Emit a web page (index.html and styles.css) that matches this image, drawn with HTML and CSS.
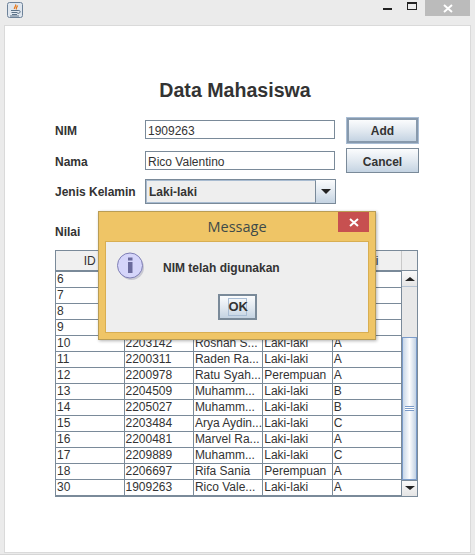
FILE: index.html
```html
<!DOCTYPE html>
<html lang="en">
<head>
    <meta charset="UTF-8">
    <meta name="viewport" content="width=device-width, initial-scale=1.0">
    <title>Data Mahasiswa</title>
    <link rel="stylesheet" href="styles.css">
</head>
<body>
    <div class="titlebar">
        <svg class="app-icon" width="16" height="16" viewBox="0 0 16 16">
            <rect x="0.5" y="0.5" width="15" height="15" rx="2" fill="#dfe6ee" stroke="#6d8299"/>
            <path d="M8.5 2.5C10 4 6.5 5 7.5 7M10.5 3.5C10.5 5 8.5 5.5 9.5 7.5" fill="none" stroke="#e8791c" stroke-width="1.3"/>
            <path d="M4 8.5H11M4.5 10.5H10.5M5 12.5H10M3 14H12M11 8.5C14 8 14 11.5 10.5 11.5" fill="none" stroke="#5b7187"/>
        </svg>
        <div class="controls">
            <span class="minimize"></span>
            <span class="maximize"></span>
            <span class="close">
                <svg width="10" height="9" viewBox="0 0 10 9"><path d="M1 1L9 8M9 1L1 8" stroke="#fff" stroke-width="2"/></svg>
            </span>
        </div>
    </div>

    <div class="content">
        <h1>Data Mahasiswa</h1>

        <div class="form">
            <label>NIM</label>
            <input class="field field-top" type="text" value="1909263">
            <button class="btn btn-focus">Add</button>

            <label class="label-low">Nama</label>
            <input class="field" type="text" value="Rico Valentino">
            <button class="btn btn-cancel">Cancel</button>

            <label class="label-low">Jenis Kelamin</label>
            <div class="combo">
                <span class="combo-value">Laki-laki</span>
                <span class="combo-arrow"><i></i></span>
            </div>
            <span></span>

            <label class="nilai-label">Nilai</label>
        </div>

        <div class="table-wrap">
            <table>
                <thead>
                    <tr><th class="col-id">ID</th><th></th><th></th><th></th><th>Nilai</th></tr>
                </thead>
                <tbody>
                    <tr><td>6</td><td></td><td></td><td></td><td></td></tr>
                    <tr><td>7</td><td></td><td></td><td></td><td></td></tr>
                    <tr><td>8</td><td></td><td></td><td></td><td></td></tr>
                    <tr><td>9</td><td></td><td></td><td></td><td></td></tr>
                    <tr><td>10</td><td>2203142</td><td>Roshan S...</td><td>Laki-laki</td><td>A</td></tr>
                    <tr><td>11</td><td>2200311</td><td>Raden Ra...</td><td>Laki-laki</td><td>A</td></tr>
                    <tr><td>12</td><td>2200978</td><td>Ratu Syah...</td><td>Perempuan</td><td>A</td></tr>
                    <tr><td>13</td><td>2204509</td><td>Muhamm...</td><td>Laki-laki</td><td>B</td></tr>
                    <tr><td>14</td><td>2205027</td><td>Muhamm...</td><td>Laki-laki</td><td>B</td></tr>
                    <tr><td>15</td><td>2203484</td><td>Arya Aydin...</td><td>Laki-laki</td><td>C</td></tr>
                    <tr><td>16</td><td>2200481</td><td>Marvel Ra...</td><td>Laki-laki</td><td>A</td></tr>
                    <tr><td>17</td><td>2209889</td><td>Muhamm...</td><td>Laki-laki</td><td>C</td></tr>
                    <tr><td>18</td><td>2206697</td><td>Rifa Sania</td><td>Perempuan</td><td>A</td></tr>
                    <tr><td>30</td><td>1909263</td><td>Rico Vale...</td><td>Laki-laki</td><td>A</td></tr>
                </tbody>
            </table>
            <div class="scrollbar">
                <div class="scroll-corner"></div>
                <div class="scroll-btn"><i class="arrow-up"></i></div>
                <div class="scroll-track"></div>
                <div class="scroll-thumb"><i></i></div>
                <div class="scroll-btn scroll-btn-down"><i class="arrow-down"></i></div>
            </div>
        </div>
    </div>

    <div class="dialog">
        <div class="dialog-title">
            <span class="dialog-caption">Message</span>
            <span class="dialog-close">
                <svg width="10" height="9" viewBox="0 0 10 9"><path d="M1 1L9 8M9 1L1 8" stroke="#fff" stroke-width="2"/></svg>
            </span>
        </div>
        <div class="dialog-body">
            <div class="dialog-msg">
                <svg class="info-icon" width="30" height="30" viewBox="0 0 30 30">
                    <circle cx="14.5" cy="15.5" r="12.5" fill="#9a9ab0" opacity="0.45"/>
                    <circle cx="13" cy="13.5" r="12.5" fill="#d5d5fa" stroke="#7e7eb4" stroke-width="1"/>
                    <rect x="11" y="10" width="4.5" height="11" fill="#6a6a9c"/>
                    <rect x="11" y="5.5" width="4.5" height="3" fill="#6a6a9c"/>
                </svg>
                <span class="dialog-text">NIM telah digunakan</span>
            </div>
            <button class="btn-ok"><span>OK</span></button>
        </div>
    </div>
</body>
</html>
```

FILE: styles.css
```css
* {
    box-sizing: border-box;
}
body {
    margin: 0;
    height: 555px;
    background: #ebebeb;
    font-family: "Liberation Sans", Arial, sans-serif;
    font-size: 12px;
    color: #333;
    overflow: hidden;
    position: relative;
    border-bottom: 1px solid #d6d6d6;
}

/* window title bar */
.titlebar {
    height: 25px;
    display: flex;
    justify-content: space-between;
    padding-left: 7px;
}
.app-icon {
    margin-top: 2px;
}
.controls {
    display: flex;
    margin-right: 5px;
}
.minimize {
    width: 9px;
    height: 2px;
    margin-top: 8px;
    margin-right: 15px;
    background: #222;
}
.maximize {
    width: 10px;
    height: 8px;
    margin-top: 2px;
    margin-right: 8px;
    border: 1px solid #222;
    border-top-width: 2px;
}
.close {
    width: 45px;
    height: 16px;
    background: #bbb;
    display: flex;
    align-items: center;
    justify-content: center;
}

/* main panel */
.content {
    width: 467px;
    height: 528px;
    margin-left: 4px;
    padding: 52px 51px 0 50px;
    background: #fff;
    border: 1px solid #dadada;
}
h1 {
    margin: 0 0 16px;
    height: 24px;
    padding-right: 4px;
    font-size: 19.6px;
    line-height: 24px;
    text-align: center;
    color: #333;
}

.form {
    display: grid;
    grid-template-columns: 90px 190px 84px;
    grid-template-rows: 25px 25px 26px 41px;
    row-gap: 5px;
    align-items: center;
}
.form label {
    font-weight: bold;
}
.form .label-low {
    padding-top: 2px;
}
.form .nilai-label {
    margin-top: 5px;
}
.field {
    height: 19px;
    padding: 2px 2px 0;
    border: 1px solid #7a8a99;
    font: 12px "Liberation Sans", Arial, sans-serif;
    color: #333;
    background: #fff;
}
.field-top {
    margin-bottom: 2px;
}
.btn {
    height: 25px;
    padding: 0;
    border: 1px solid #7a8a99;
    background: linear-gradient(#fbfcfd, #dfe7ef 55%, #c4d3e2);
    font: bold 12px "Liberation Sans", Arial, sans-serif;
    color: #333;
}
.btn-focus {
    width: 71px;
    justify-self: end;
    margin-right: 1px;
    border-width: 2px;
    border-color: #8799ac;
    outline: 1px solid #a9bdd4;
}
.btn-cancel {
    width: 73px;
    justify-self: end;
    padding-top: 2px;
}
.combo {
    height: 25px;
    width: 191px;
    align-self: end;
    display: flex;
    border: 1px solid #7a8a99;
}
.combo-value {
    flex: 1;
    padding-left: 2px;
    line-height: 23px;
    font-weight: bold;
    background: #eee;
    border: 1px solid #a8bbd0;
    border-right: 1px solid #7a8a99;
}
.combo-arrow {
    width: 19px;
    display: flex;
    align-items: center;
    justify-content: center;
    background: linear-gradient(#fbfcfd, #dfe7ef 55%, #c4d3e2);
}
.combo-arrow i {
    border-left: 5px solid transparent;
    border-right: 5px solid transparent;
    border-top: 5px solid #222;
}

/* table */
.table-wrap {
    display: flex;
    width: 363px;
    border: 1px solid #7a8a99;
}
table {
    width: 346px;
    table-layout: fixed;
    border-collapse: collapse;
}
th {
    height: 20px;
    padding: 0;
    font-weight: normal;
    white-space: nowrap;
    overflow: hidden;
    background: #f0f0f0;
    border-right: 1px solid #c9c9c9;
    border-bottom: 2px solid #7a8a99;
}
.col-id {
    width: 68px;
}
td {
    height: 16px;
    padding: 0 0 0 1px;
    line-height: 14px;
    border: 1px solid #7a8a99;
    border-top: 0;
    overflow: hidden;
    white-space: nowrap;
}
td:first-child {
    border-left: 0;
}
.scrollbar {
    flex: 1;
    display: flex;
    flex-direction: column;
    background: #e9e9e9;
}
.scroll-corner {
    height: 20px;
    background: #eee;
    border-bottom: 1px solid #7a8a99;
}
.scroll-btn {
    height: 16px;
    display: flex;
    align-items: center;
    justify-content: center;
    background: linear-gradient(#fafafa, #e4e4e4);
    border-bottom: 1px solid #b5c3d3;
}
.scroll-btn-down {
    border-top: 1px solid #7a8a99;
    border-bottom: 0;
}
.arrow-up {
    border-left: 5px solid transparent;
    border-right: 5px solid transparent;
    border-bottom: 4px solid #222;
}
.arrow-down {
    border-left: 5px solid transparent;
    border-right: 5px solid transparent;
    border-top: 4px solid #222;
}
.scroll-track {
    height: 50px;
    background: #e8e8e8;
}
.scroll-thumb {
    flex: 1;
    display: flex;
    align-items: center;
    justify-content: center;
    background: linear-gradient(90deg, #c8d7e8, #fdfdfe 50%, #c2d2e4);
    border: 1px solid #7b9bc9;
}
.scroll-thumb i {
    width: 9px;
    height: 5px;
    border-top: 1px solid #7b9bc9;
    border-bottom: 1px solid #7b9bc9;
    background: linear-gradient(#fff 1px, #7b9bc9 1px, #7b9bc9 2px, #fff 2px);
}

/* message dialog, sits over the form */
.dialog {
    position: absolute;
    left: 98px;
    top: 211px;
    width: 278px;
    height: 129px;
    padding: 0 6px 6px;
    background: #efc566;
    border: 1px solid #b99d55;
    box-shadow: 1px 1px 3px rgba(0, 0, 0, 0.3);
}
.dialog-title {
    height: 29px;
    display: flex;
    justify-content: space-between;
}
.dialog-caption {
    flex: 1;
    padding-left: 31px;
    text-align: center;
    font-family: "Open Sans", sans-serif;
    font-size: 14.5px;
    line-height: 29px;
    color: #3d4a4a;
}
.dialog-close {
    width: 31px;
    height: 20px;
    background: #c75050;
    display: flex;
    align-items: center;
    justify-content: center;
}
.dialog-body {
    height: 92px;
    background: #eee;
    border: 1px solid #d8ae52;
    display: flex;
    flex-direction: column;
    align-items: center;
}
.dialog-msg {
    align-self: flex-start;
    display: flex;
    align-items: center;
    height: 52px;
    padding: 0 0 2px 11px;
}
.dialog-text {
    margin-left: 16px;
    margin-top: 1px;
    font-weight: bold;
}
.btn-ok {
    width: 39px;
    height: 26px;
    padding: 0;
    border: 2px solid #7a8a99;
    background: linear-gradient(#fbfcfd, #dfe7ef 55%, #c4d3e2);
    font: bold 13px "Liberation Sans", Arial, sans-serif;
    color: #333;
}
.btn-ok span {
    display: block;
    width: 19px;
    height: 18px;
    margin: 0 auto;
    line-height: 16px;
    border: 1px solid #a9bdd4;
}
```
